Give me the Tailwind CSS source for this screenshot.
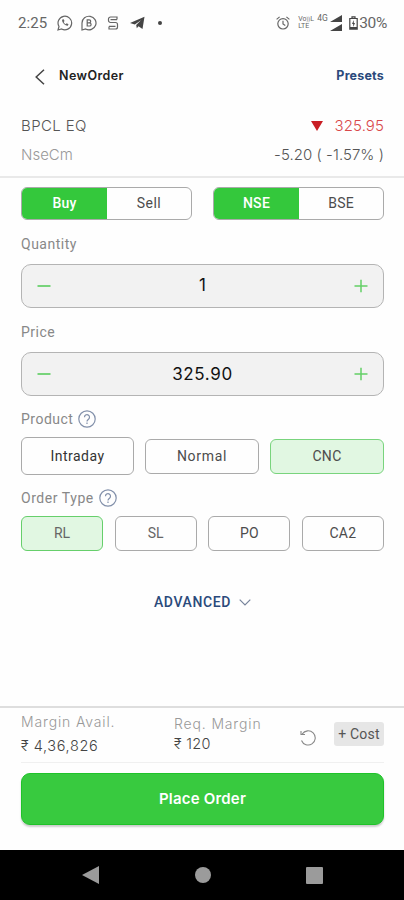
<!DOCTYPE html>
<html lang="en">
<head>
<meta charset="utf-8">
<meta name="viewport" content="width=device-width, initial-scale=1">
<title>New Order</title>
<script src="https://cdn.jsdelivr.net/npm/@tailwindcss/browser@4"></script>
</head>
<body class="bg-white">
<div class="w-[404px] h-[900px] flex flex-col overflow-hidden bg-[#fefefe] font-['Roboto',sans-serif] whitespace-nowrap">
  <!-- Status bar -->
  <div class="h-[46px] shrink-0 flex items-center justify-between pl-[18px] pr-[17px] text-[#666]">
    <div class="flex items-center">
      <span class="w-[39px] text-[15px] leading-4 tracking-[0.1px]">2:25</span>
      <svg class="w-4 h-4" viewBox="0 0 16 16" fill="none" stroke="currentColor" stroke-width="1.2"><path d="M1 15l1-3.5A6.8 6.8 0 1 1 4.600 14z"/><path d="M5.300 4.500c-1.200 2 2.500 6.500 5.500 6.200l.7-1.400-1.800-1-1 .9C7.700 8.800 7 8 6.800 7l.7-.9-.8-1.800z" fill="currentColor" stroke="none"/></svg>
      <svg class="ml-2 w-4 h-4" viewBox="0 0 16 16" fill="none" stroke="currentColor" stroke-width="1.200"><path d="M1 15V8A7 6.800 0 1 1 4.600 14z"/><path d="M6.200 4.800v6.200h2.300a1.600 1.600 0 0 0 0-3.200H6.200h2a1.500 1.500 0 0 0 0-3z"/></svg>
      <svg class="ml-[10px] w-3 h-[14px]" viewBox="0 0 12 14" fill="none" stroke="currentColor" stroke-width="1.200"><path d="M10 3.500V1H3.500a2 2 0 0 0-2 2v1.500a2 2 0 0 0 2 2h5a2 2 0 0 1 2 2V11a2 2 0 0 1-2 2H2v-2.500"/><path d="M3.500 3.700H10M2 10.300h6.500"/></svg>
      <svg class="ml-[11px] w-[15px] h-[14px] text-[#444]" viewBox="0 0 15 14"><path fill="currentColor" d="M0 7L14.500.8 12.500 13 8.500 10.300 6.800 12.300 6.200 9 11 4.200 4.800 8.400z"/></svg>
      <span class="ml-[13px] w-1 h-1 rounded-full bg-[#444]"></span>
    </div>
    <div class="flex items-center">
      <svg class="w-[14px] h-[14px]" viewBox="0 0 14 14" fill="none" stroke="currentColor" stroke-width="1.200"><circle cx="7" cy="7.800" r="5.200"/><path d="M7 4.800V8l2.300 1.500M.6 3.400L3.600.9M10.400.9l3 2.500"/></svg>
      <span class="ml-2 w-[19px] text-[7px] leading-[7px]">Vo<span class="text-[5.500px]">))</span>L<br>LTE</span>
      <span class="w-[13px] mb-[11px] text-[8.500px] leading-2">4G</span>
      <svg class="w-3 h-4 text-[#444]" viewBox="0 0 12 16" fill="currentColor"><path d="M0 7L12 0v7zM0 16l12-7v7z"/></svg>
      <svg class="ml-[7px] w-[9px] h-[14px] text-[#444]" viewBox="0 0 9 14" fill="none" stroke="currentColor" stroke-width="1.200"><path d="M3 2V.8h3V2M.8 2.500h7.400v10.700H.8z"/><path d="M1 11h7v2H1zM4.800 4L3 8h1.200v3L6 7H4.800z" fill="currentColor" stroke="none"/></svg>
      <span class="ml-px text-[15.500px] leading-4 tracking-[-0.300px]">30%</span>
    </div>
  </div>

  <!-- Header -->
  <header class="h-[61px] shrink-0 flex items-center justify-between pl-[35px] pr-5 font-['Inter',sans-serif]">
    <div class="flex items-center">
      <svg class="w-[10px] h-4" viewBox="0 0 10 16" fill="none" stroke="#444" stroke-width="1.500"><path d="M9 .8L1.200 8 9 15.200"/></svg>
      <h1 class="ml-[14px] text-[12.500px] font-semibold text-[#222] tracking-[0.400px]">NewOrder</h1>
    </div>
    <span class="text-[12.500px] font-bold text-[#2b4a7b] tracking-[0.200px]">Presets</span>
  </header>

  <!-- Instrument quote -->
  <section class="h-[71px] shrink-0 border-b-2 border-[#e9e9e9] pt-[9px] pl-[21px] pr-5 font-['Inter',sans-serif] font-light">
    <div class="h-5 flex items-center justify-between text-[15px]">
      <span class="text-[#555] tracking-[0.400px]">BPCL EQ</span>
      <span class="flex items-center text-[#d9484a]"><svg class="mr-[12px] w-3 h-[10px]" viewBox="0 0 12 10"><path fill="#c91f25" d="M0 0h12L6 10z"/></svg><span class="tracking-[0.100px]">325.95</span></span>
    </div>
    <div class="mt-[9px] h-5 flex items-center justify-between text-[15px]">
      <span class="text-[#999]">NseCm</span>
      <span class="text-[#555] tracking-[0.050px]">-5.20 ( -1.57% )</span>
    </div>
  </section>

  <!-- Order form -->
  <main class="h-[528px] shrink-0 pt-[9px] pl-[21px] pr-5 text-[14px] text-[#4c4c4c]">
    <div class="h-[33px] flex justify-between">
      <div class="w-[171px] flex rounded-[6px] border border-[#aaa] overflow-hidden">
        <button class="w-[85px] bg-[#34c83c] text-white font-medium tracking-[0.200px]">Buy</button><button class="flex-1 tracking-[0.500px]">Sell</button>
      </div>
      <div class="w-[171px] flex rounded-[6px] border border-[#aaa] overflow-hidden">
        <button class="w-[85px] bg-[#34c83c] text-white font-medium tracking-[0.300px]">NSE</button><button class="flex-1 tracking-[0.200px]">BSE</button>
      </div>
    </div>

    <div class="mt-[14px] h-5 leading-5 text-[#888] tracking-[0.500px]">Quantity</div>
    <div class="mt-[10px] h-[44px] flex items-center justify-between rounded-[10px] border border-[#b4b4b4] bg-[#f2f2f2] px-[15px]">
      <svg class="w-[14px] h-[14px]" viewBox="0 0 14 14" stroke="#63cf66" stroke-width="1.700"><path d="M.5 7h13"/></svg>
      <span class="font-['Inter',sans-serif] text-[17px] text-[#111]">1</span>
      <svg class="w-[14px] h-[14px]" viewBox="0 0 14 14" stroke="#63cf66" stroke-width="1.500"><path d="M.5 7h13M7 .8v12.400"/></svg>
    </div>

    <div class="mt-[14px] h-5 leading-5 text-[#888] tracking-[0.500px]">Price</div>
    <div class="mt-[10px] h-[44px] flex items-center justify-between rounded-[10px] border border-[#b4b4b4] bg-[#f2f2f2] px-[15px]">
      <svg class="w-[14px] h-[14px]" viewBox="0 0 14 14" stroke="#63cf66" stroke-width="1.700"><path d="M.5 7h13"/></svg>
      <span class="pt-px font-['Inter',sans-serif] text-[17px] text-[#111] tracking-[0.650px]">325.90</span>
      <svg class="w-[14px] h-[14px]" viewBox="0 0 14 14" stroke="#63cf66" stroke-width="1.500"><path d="M.5 7h13M7 .8v12.400"/></svg>
    </div>

    <div class="mt-[13px] h-5 flex items-center text-[#888] tracking-[0.500px]">Product
      <svg class="ml-[5px] w-[18px] h-[18px]" viewBox="0 0 18 18" fill="none" stroke="#8290aa" stroke-width="1.200"><circle cx="9" cy="9" r="8.200"/><path d="M6.500 7.200a2.500 2.500 0 1 1 4.200 1.800C9.500 9.900 9 10.200 9 11.400M9 12.600v1.300"/></svg>
    </div>
    <div class="mt-2 h-[38px] flex items-center justify-between">
      <button class="w-[113px] h-[38px] rounded-[6px] border border-[#aaa] text-[#333] tracking-[0.500px]">Intraday</button>
      <button class="w-[114px] h-[35px] rounded-[6px] border border-[#aaa] tracking-[0.700px]">Normal</button>
      <button class="w-[114px] h-[35px] rounded-[6px] border border-[#79d47d] bg-[#e1f7e2] tracking-[0.300px]">CNC</button>
    </div>

    <div class="mt-[13px] h-5 flex items-center text-[#888] tracking-[0.550px]">Order Type
      <svg class="ml-[5px] w-[18px] h-[18px]" viewBox="0 0 18 18" fill="none" stroke="#8290aa" stroke-width="1.200"><circle cx="9" cy="9" r="8.200"/><path d="M6.500 7.200a2.500 2.500 0 1 1 4.200 1.800C9.500 9.900 9 10.200 9 11.400M9 12.600v1.300"/></svg>
    </div>
    <div class="mt-[8px] h-[35px] flex justify-between">
      <button class="w-[82px] rounded-[6px] border border-[#66cf6b] bg-[#e1f7e2] text-[#666]">RL</button>
      <button class="w-[82px] rounded-[6px] border border-[#aaa] text-[#666]">SL</button>
      <button class="w-[82px] rounded-[6px] border border-[#aaa]">PO</button>
      <button class="w-[82px] rounded-[6px] border border-[#aaa] tracking-[0.300px]">CA2</button>
    </div>

    <div class="mt-[41px] h-5 flex items-center justify-center text-[#2b4a7b] font-medium tracking-[0.600px]">ADVANCED
      <svg class="ml-[8px] w-3 h-[7px]" viewBox="0 0 12 7" fill="none" stroke="#76839b" stroke-width="1.200"><path d="M.7.700L6 6l5.300-5.300"/></svg>
    </div>
  </main>

  <!-- Margin summary and submit -->
  <footer class="h-[144px] shrink-0 border-t-2 border-[#dedede] pl-[21px] pr-5">
    <div class="h-[55px] flex border-b border-[#f0f0f0] font-['Inter',sans-serif] font-light">
      <div class="w-[153px] pt-[4px] leading-5">
        <div class="text-[14px] text-[#999] tracking-[0.850px]">Margin Avail.</div>
        <div class="mt-1 text-[14.500px] text-[#444] tracking-[0.600px]">₹ 4,36,826</div>
      </div>
      <div class="w-[126px] pt-[6px]">
        <div class="leading-5 text-[14px] text-[#999] tracking-[0.850px]">Req. Margin</div>
        <div class="leading-5 text-[14.500px] text-[#444] tracking-[0.300px]">₹ 120</div>
      </div>
      <svg class="mt-[22px] w-4 h-4" viewBox="0 0 16 16" fill="none" stroke="#888" stroke-width="1.100"><path d="M2.200 4A7.100 7.100 0 1 1 1.500 10.500M1 1v3.500h4"/></svg>
      <div class="ml-auto mt-[14px] w-[50px] h-[24px] flex items-center justify-center rounded-[3px] bg-[#e6e6e6] font-['Roboto',sans-serif] font-normal text-[14px] text-[#555] tracking-[0.200px]">+ Cost</div>
    </div>
    <button class="mt-[10px] w-full h-[52px] rounded-[9px] border border-[#1fc329] bg-[#38ca3f] shadow-[0_2px_2px_rgba(0,0,0,0.2)] text-white font-['Inter',sans-serif] font-semibold text-[15px] tracking-[0.200px]">Place Order</button>
  </footer>

  <!-- System navigation -->
  <nav class="h-[50px] shrink-0 bg-black flex items-center justify-between pl-[82px] pr-[81px]">
    <svg class="w-[17px] h-[18px]" viewBox="0 0 17 18"><path fill="#9b9b9b" d="M17 0v18L0 9z"/></svg>
    <span class="w-4 h-4 rounded-full bg-[#9b9b9b]"></span>
    <span class="w-[17px] h-[17px] rounded-[1px] bg-[#9b9b9b]"></span>
  </nav>
</div>
</body>
</html>
